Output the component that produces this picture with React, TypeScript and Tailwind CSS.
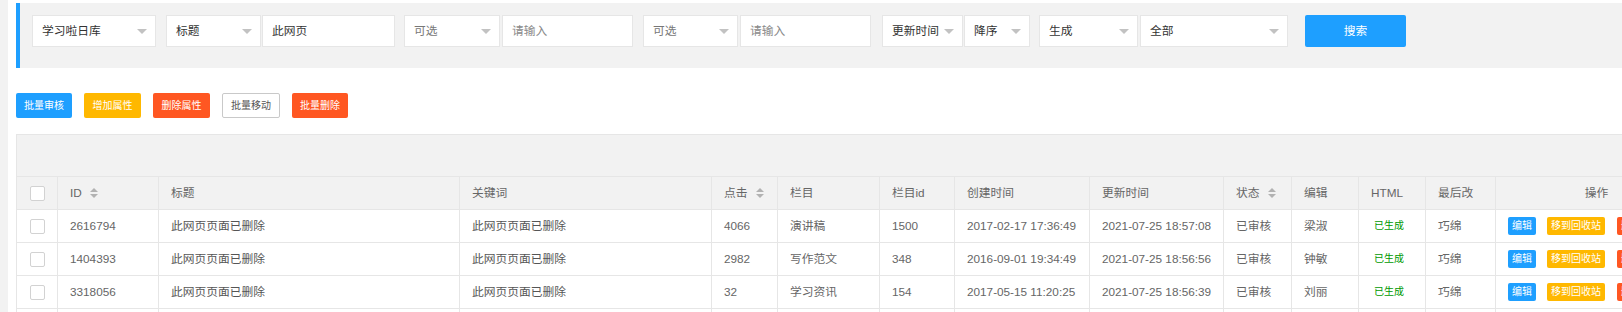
import React from 'react';

type Col = { title: string; w: string; sort?: boolean; center?: boolean };

const cols: Col[] = [
    { title: '', w: 'w-[41px]' },
    { title: 'ID', w: 'w-[101px]', sort: true },
    { title: '标题', w: 'w-[301px]' },
    { title: '关键词', w: 'w-[252px]' },
    { title: '点击', w: 'w-[66px]', sort: true },
    { title: '栏目', w: 'w-[102px]' },
    { title: '栏目id', w: 'w-[75px]' },
    { title: '创建时间', w: 'w-[135px]' },
    { title: '更新时间', w: 'w-[134px]' },
    { title: '状态', w: 'w-[68px]', sort: true },
    { title: '编辑', w: 'w-[67px]' },
    { title: 'HTML', w: 'w-[67px]' },
    { title: '最后改', w: 'w-[70px]' },
    { title: '操作', w: 'w-[202px]', center: true },
];

const rows = [
    ['2616794', '4066', '演讲稿', '1500', '2017-02-17 17:36:49', '2021-07-25 18:57:08', '梁淑'],
    ['1404393', '2982', '写作范文', '348', '2016-09-01 19:34:49', '2021-07-25 18:56:56', '钟敏'],
    ['3318056', '32', '学习资讯', '154', '2017-05-15 11:20:25', '2021-07-25 18:56:39', '刘丽'],
    ['2750431', '518', '演讲稿', '1500', '2017-03-02 09:12:40', '2021-07-25 18:56:21', '梁淑'],
];

function Edge() {
    return <span className="w-0 h-0 border-x-[5px] border-x-transparent border-t-[5px] border-t-[#c2c2c2] shrink-0" />;
}

function SortIcon() {
    return (
        <svg width="8" height="10" viewBox="0 0 8 10" className="ml-2 shrink-0">
            <path d="M0 4 L4 0 L8 4 Z" fill="#b2b2b2" />
            <path d="M0 6 L8 6 L4 10 Z" fill="#b2b2b2" />
        </svg>
    );
}

function Select({ w, value, muted, className = '' }: { w: string; value: string; muted?: boolean; className?: string }) {
    return (
        <div className={`${w} ${className} h-8 bg-white border border-[#e6e6e6] flex items-center justify-between pl-[9px] pr-2 shrink-0`}>
            <span className={muted ? 'text-[#777]' : 'text-[#333]'}>{value}</span>
            <Edge />
        </div>
    );
}

function Input({ w, value, placeholder, className = '' }: { w: string; value?: string; placeholder?: string; className?: string }) {
    return (
        <div className={`${w} ${className} h-8 bg-white border border-[#e6e6e6] flex items-center pl-[9px] shrink-0`}>
            {value ? <span className="text-[#333]">{value}</span> : <span className="text-[#8a8a8a]">{placeholder}</span>}
        </div>
    );
}

function CheckBox() {
    return <div className="w-[15px] h-[15px] bg-white border border-[#d2d2d2] rounded-[2px]" />;
}

export default function App() {
    return (
        <div
            className="h-[312px] w-full overflow-hidden bg-white flex text-[11.76px] leading-none"
            style={{ fontFamily: '"Liberation Sans", "Noto Sans CJK SC", sans-serif' }}
        >
            <div className="w-2 shrink-0 bg-[#f2f2f2]" />

            <div className="flex-1 min-w-0 pl-2 pt-[3px]">
                {/* Search form */}
                <div className="h-[65px] bg-[#f2f2f2] border-l-4 border-[#1e9fff] pl-3 pt-3 flex items-start">
                    <Select w="w-[124px]" value="学习啦日库" />
                    <Select w="w-[95px]" value="标题" className="ml-[10px]" />
                    <Input w="w-[133px]" value="此网页" className="ml-px" />
                    <Select w="w-[96px]" value="可选" muted className="ml-[9px]" />
                    <Input w="w-[131px]" placeholder="请输入" className="ml-[2px]" />
                    <Select w="w-[95px]" value="可选" muted className="ml-[10px]" />
                    <Input w="w-[131px]" placeholder="请输入" className="ml-[2px]" />
                    <Select w="w-[81px]" value="更新时间" className="ml-[11px]" />
                    <Select w="w-[66px]" value="降序" className="ml-px" />
                    <Select w="w-[99px]" value="生成" className="ml-[9px]" />
                    <Select w="w-[148px]" value="全部" className="ml-[2px]" />
                    <button className="ml-[17px] w-[101px] h-8 bg-[#1e9fff] text-white rounded-[2px] shrink-0">搜索</button>
                </div>

                {/* Batch actions */}
                <div className="mt-[25px] flex gap-3 text-[10px]">
                    <button className="h-[25px] w-[56px] rounded-[2px] bg-[#1e9fff] text-white">批量审核</button>
                    <button className="h-[25px] w-[57px] rounded-[2px] bg-[#ffb800] text-white">增加属性</button>
                    <button className="h-[25px] w-[57px] rounded-[2px] bg-[#ff5722] text-white">删除属性</button>
                    <button className="h-[25px] w-[58px] rounded-[2px] bg-white border border-[#c9c9c9] text-[#555]">批量移动</button>
                    <button className="h-[25px] w-[56px] rounded-[2px] bg-[#ff5722] text-white">批量删除</button>
                </div>

                {/* Table */}
                <div className="mt-4 border-t border-l border-[#e6e6e6] text-[#666]">
                    <div className="h-[42px] bg-[#f2f2f2] border-b border-[#e6e6e6]" />

                    <div className="flex h-[33px] bg-[#f2f2f2] border-b border-[#e6e6e6]">
                        {cols.map((c, i) => (
                            <div
                                key={i}
                                className={`${c.w} shrink-0 border-r border-[#e6e6e6] flex items-center ${i === 0 || c.center ? 'justify-center' : 'pl-3'}`}
                            >
                                {i === 0 ? <CheckBox /> : <span>{c.title}</span>}
                                {c.sort && <SortIcon />}
                            </div>
                        ))}
                    </div>

                    {rows.map((r, ri) => {
                        const cells = [
                            r[0],
                            '此网页页面已删除',
                            '此网页页面已删除',
                            r[1],
                            r[2],
                            r[3],
                            r[4],
                            r[5],
                            '已审核',
                            r[6],
                        ];
                        return (
                            <div key={ri} className="flex h-[33px] border-b border-[#e6e6e6]">
                                <div className={`${cols[0].w} shrink-0 border-r border-[#e6e6e6] flex items-center justify-center`}>
                                    <CheckBox />
                                </div>
                                {cells.map((v, ci) => (
                                    <div
                                        key={ci}
                                        className={`${cols[ci + 1].w} shrink-0 border-r border-[#e6e6e6] flex items-center pl-3 ${ci === 1 || ci === 2 ? 'text-[#555]' : ''}`}
                                    >
                                        {v}
                                    </div>
                                ))}
                                <div className={`${cols[11].w} shrink-0 border-r border-[#e6e6e6] flex items-center pl-[15px] text-[10px] text-[#009900]`}>
                                    已生成
                                </div>
                                <div className={`${cols[12].w} shrink-0 border-r border-[#e6e6e6] flex items-center pl-3`}>巧绵</div>
                                <div className={`${cols[13].w} shrink-0 flex items-center pl-3 text-[10px] text-white`}>
                                    <span className="h-[18px] px-1 flex items-center rounded-[2px] bg-[#1e9fff]">编辑</span>
                                    <span className="ml-[11px] h-[18px] px-1 flex items-center rounded-[2px] bg-[#ffb800]">移到回收站</span>
                                    <span className="ml-[12px] h-[18px] px-1 flex items-center rounded-[2px] bg-[#ff5722] shrink-0">删除</span>
                                </div>
                            </div>
                        );
                    })}
                </div>
            </div>
        </div>
    );
}
